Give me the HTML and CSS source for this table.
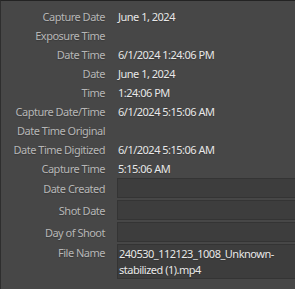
FILE: index.html
```html
<!DOCTYPE html>
<html lang="en">
<head>
<meta charset="utf-8">
<title>Metadata</title>
<link rel="stylesheet" href="styles.css">
</head>
<body>
<div class="panel">
  <div class="row"><span class="label">Capture Date</span><span class="value">June 1, 2024</span></div>
  <div class="row"><span class="label">Exposure Time</span><span class="value"></span></div>
  <div class="row"><span class="label">Date Time</span><span class="value">6/1/2024 1:24:06 PM</span></div>
  <div class="row"><span class="label">Date</span><span class="value">June 1, 2024</span></div>
  <div class="row"><span class="label">Time</span><span class="value">1:24:06 PM</span></div>
  <div class="row"><span class="label">Capture Date/Time</span><span class="value">6/1/2024 5:15:06 AM</span></div>
  <div class="row"><span class="label">Date Time Original</span><span class="value"></span></div>
  <div class="row"><span class="label">Date Time Digitized</span><span class="value">6/1/2024 5:15:06 AM</span></div>
  <div class="row"><span class="label">Capture Time</span><span class="value">5:15:06 AM</span></div>
  <div class="row field"><span class="label">Date Created</span><span class="box"></span></div>
  <div class="row field"><span class="label">Shot Date</span><span class="box"></span></div>
  <div class="row field"><span class="label">Day of Shoot</span><span class="box"></span></div>
  <div class="row field tall"><span class="label">File Name</span><span class="box">240530_112123_1008_Unknown-stabilized (1).mp4</span></div>
</div>
</body>
</html>
```
FILE: styles.css
```css
html, body {
  margin: 0;
  padding: 0;
  background: #474747;
}

.panel {
  width: 295px;
  min-height: 289px;
  box-sizing: border-box;
  border-top: 1px solid #232323;
  border-left: 1px solid #2e2e2e;
  padding-top: 6px;
  font-family: "Noto Sans", "Open Sans", sans-serif;
  font-size: 11px;
  letter-spacing: -0.5px;
  text-shadow: 0 1px 1px rgba(0, 0, 0, 0.2);
  display: flex;
  flex-direction: column;
}

.row {
  display: grid;
  grid-template-columns: 104px 1fr;
  column-gap: 12px;
  height: 19px;
  align-items: center;
}

.label {
  text-align: right;
  color: #b6b6b6;
  white-space: nowrap;
}

.value {
  color: #e8e8e8;
  white-space: nowrap;
  padding-left: 1px;
}

.field {
  height: 20px;
  margin-bottom: 2px;
}

.box {
  align-self: stretch;
  background: #3d3d3d;
  border: 1px solid #343434;
  border-right: none;
  color: #e8e8e8;
  padding: 0 4px 0 1px;
  line-height: 16px;
}

.tall {
  height: 35px;
  align-items: start;
}

.tall .label {
  padding-top: 1px;
}

.tall .box {
  padding-top: 1px;
}
```
